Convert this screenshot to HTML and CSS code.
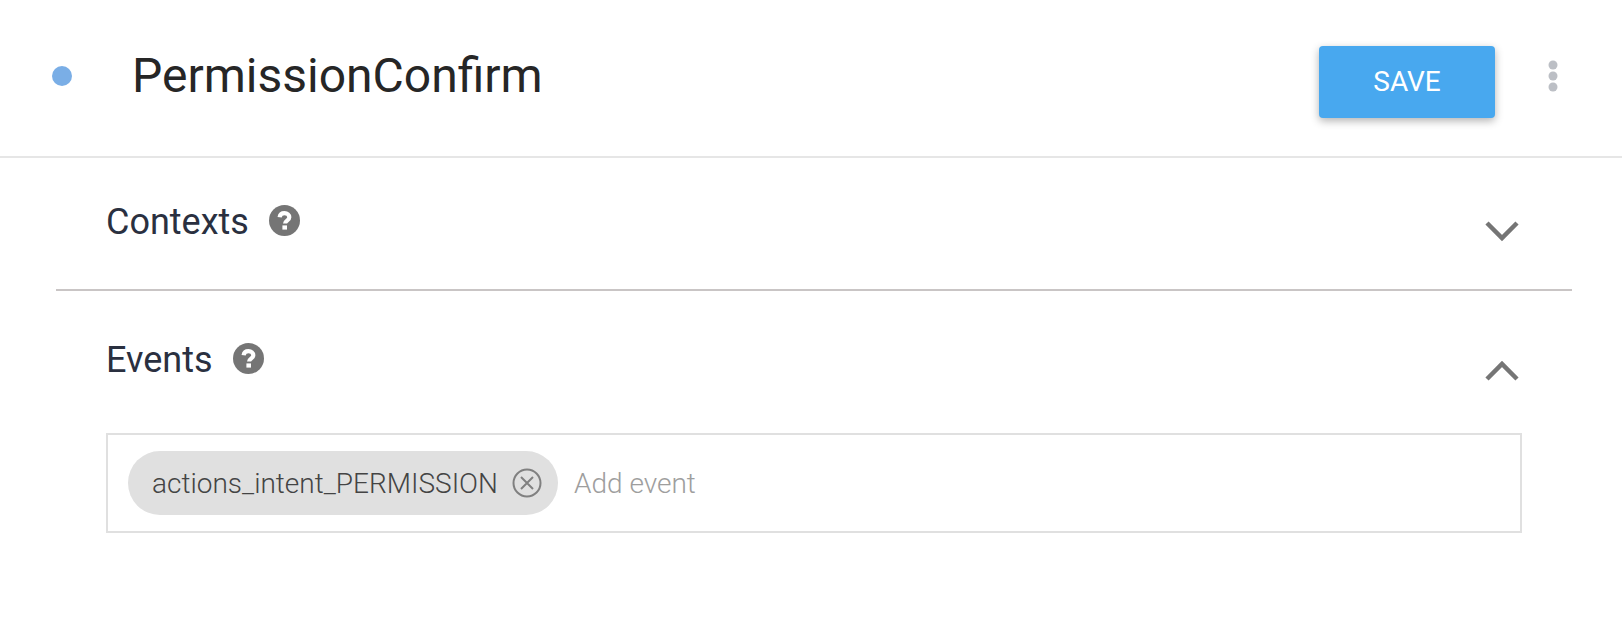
FILE: index.html
```html
<!doctype html>
<html lang="en">
<head>
    <meta charset="UTF-8">
    <title>PermissionConfirm</title>
    <link rel="stylesheet" href="styles.css">
</head>
<body>
<div class="header">
    <span class="dot"></span>
    <h1 class="title">PermissionConfirm</h1>
    <a class="save">SAVE</a>
    <svg class="more" viewBox="0 0 10 32"><circle cx="5" cy="5" r="4.5"/><circle cx="5" cy="16" r="4.5"/><circle cx="5" cy="27" r="4.5"/></svg>
</div>
<div class="sections">
    <div class="section contexts">
        <div class="section-head">
            <span class="section-title">Contexts</span>
            <svg class="help" viewBox="0 0 31 31"><circle cx="15.5" cy="15.5" r="15.5"/><path d="M10.6 12.2c.4-2.600 2.300-4 4.900-4 2.800 0 4.800 1.600 4.800 4 0 3.400-4.200 3.300-4.200 6.200"/><rect x="13.400" y="20.400" width="4.600" height="4.200"/></svg>
            <svg class="chevron" viewBox="0 0 34 21"><path d="M2 2l15 15L32 2"/></svg>
        </div>
    </div>
    <div class="section events">
        <div class="section-head">
            <span class="section-title">Events</span>
            <svg class="help" viewBox="0 0 31 31"><circle cx="15.5" cy="15.5" r="15.5"/><path d="M10.6 12.2c.4-2.600 2.300-4 4.900-4 2.800 0 4.800 1.600 4.800 4 0 3.400-4.200 3.300-4.200 6.200"/><rect x="13.400" y="20.400" width="4.600" height="4.200"/></svg>
            <svg class="chevron" viewBox="0 0 34 21"><path d="M2 19L17 4l15 15"/></svg>
        </div>
        <div class="event-box">
            <span class="chip">
                actions_intent_PERMISSION
                <svg class="chip-close" viewBox="0 0 30 30"><circle cx="15" cy="15" r="13.500"/><path d="M9 9l12 12M21 9L9 21"/></svg>
            </span>
            <span class="placeholder">Add event</span>
        </div>
    </div>
</div>
</body>
</html>
```

FILE: styles.css
```css
* {
    padding: 0;
    margin: 0;
    box-sizing: border-box;
}

body {
    background: #fff;
    font-family: Roboto, sans-serif;
}

.header {
    display: flex;
    align-items: center;
    height: 158px;
    padding: 0 64px 6px 52px;
    border-bottom: 2px solid #e6e6e6;
}

.dot {
    width: 20px;
    height: 20px;
    margin: 2px 60px 0 0;
    border-radius: 50%;
    background: #7aaee6;
}

.title {
    flex: 1;
    font-size: 48px;
    font-weight: 400;
    color: #262626;
}

.save {
    width: 176px;
    height: 72px;
    margin-top: 13px;
    line-height: 72px;
    text-align: center;
    font-size: 28px;
    color: #fff;
    background: #48a8ef;
    border-radius: 4px;
    box-shadow: 0 3px 8px rgba(0, 0, 0, 0.3);
}

.more {
    width: 10px;
    height: 32px;
    margin: 2px 0 0 53px;
    fill: #bcbfc5;
}

.sections {
    padding: 0 50px 0 56px;
}

.section {
    padding: 0 50px;
}

.contexts {
    height: 133px;
    border-bottom: 2px solid #c9c5c5;
}

.section-head {
    display: flex;
    align-items: flex-start;
    padding-top: 44px;
}

.events .section-head {
    padding-top: 49px;
}

.section-title {
    font-size: 36px;
    line-height: 40px;
    color: #2a3040;
}

.help {
    width: 31px;
    height: 31px;
    margin: 3px auto 0 20px;
}

.help circle {
    fill: #757575;
}

.help path {
    fill: none;
    stroke: #fff;
    stroke-width: 4.200;
}

.help rect {
    fill: #fff;
}

.chevron {
    width: 34px;
    height: 21px;
    margin: 19px 3px 0 0;
    fill: none;
    stroke: #757575;
    stroke-width: 4.500;
}

.events .chevron {
    margin-top: 20px;
}

.event-box {
    display: flex;
    align-items: center;
    height: 100px;
    margin-top: 52px;
    padding-left: 20px;
    border: 2px solid #e0e0e0;
}

.chip {
    display: flex;
    align-items: center;
    height: 64px;
    padding: 0 16px 0 24px;
    font-size: 28px;
    font-weight: 300;
    color: #444;
    background: #e0e0e0;
    border-radius: 32px;
}

.chip-close {
    width: 30px;
    height: 30px;
    margin-left: 14px;
    fill: none;
    stroke: #808080;
    stroke-width: 2;
}

.placeholder {
    margin-left: 16px;
    font-size: 28px;
    font-weight: 300;
    color: #9e9e9e;
}
```
